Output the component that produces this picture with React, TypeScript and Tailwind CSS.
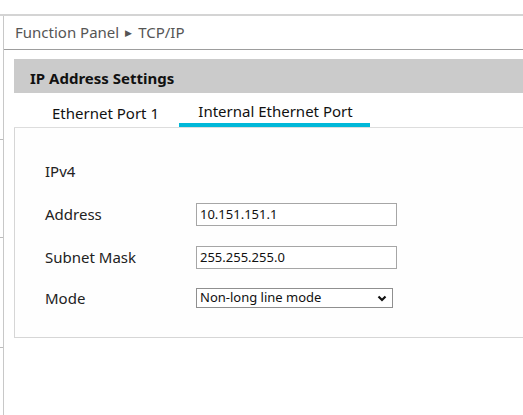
const font = { fontFamily: '"Noto Sans", "Open Sans", sans-serif' };

const Field = ({ label, value }: { label: string; value: string }) => (
  <div className="flex items-center h-[22px]">
    <span className="w-[151px] text-[15px] text-[#222]">{label}</span>
    <input
      readOnly
      value={value}
      className="w-[201px] h-[23px] border border-[#a6a6a6] bg-white px-[3px] text-[13px] text-[#111] outline-none"
    />
  </div>
);

const Chevron = () => (
  <svg width="10" height="7" viewBox="0 0 10 7" className="shrink-0">
    <path d="M1.5 1.5 L5 5 L8.5 1.5" fill="none" stroke="#111" strokeWidth="2.2" />
  </svg>
);

export default function App() {
  return (
    <div className="w-[523px] h-[415px] bg-white overflow-hidden relative" style={font}>
      {/* left ticks */}
      <div className="absolute left-0 top-[139px] w-[3px] h-px bg-[#bbb]" />
      <div className="absolute left-0 top-[237px] w-[3px] h-px bg-[#bbb]" />
      <div className="absolute left-0 top-[347px] w-[3px] h-px bg-[#bbb]" />

      <div className="h-[14px]" />
      <div className="h-[2px] bg-[#d4d4d4]" />
      <div className="ml-[3px] border-l border-[#c8c8c8] h-[399px]">
        {/* breadcrumb */}
        <div className="h-[34px] flex items-center pl-[11px] text-[15px] text-[#555] border-b border-[#9d9d9d]">
          <span>Function Panel</span>
          <span className="mx-[6px] text-[9px] text-[#555]">▶</span>
          <span>TCP/IP</span>
        </div>

        <div className="pl-[10px] pt-[9px]">
          <div className="h-[34px] bg-[#cbcbcb] flex items-center pl-[16px] pt-[5px] text-[15px] font-bold text-[#111]">
            IP Address Settings
          </div>

          {/* tabs */}
          <div className="flex h-[35px] items-end border-b border-[#ddd]">
            <div className="w-[165px] h-full flex items-center text-[15px] text-[#111] pl-[38px] pt-[6px]">
              Ethernet Port 1
            </div>
            <div className="w-[191px] h-full flex flex-col">
              <div className="flex-1 flex items-center justify-center text-[15px] text-[#111] pt-[6px] pl-[2px]">
                Internal Ethernet Port
              </div>
              <div className="h-[4px] bg-[#00b8d9]" />
            </div>
          </div>

          {/* content */}
          <div className="h-[210px] border-l border-b border-[#d6d6d6] bg-[#fefefe] pl-[30px] pt-[33px]">
            <div className="text-[15px] text-[#222] leading-[20px]">IPv4</div>
            <div className="mt-[22px] flex flex-col gap-[21px]">
              <Field label="Address" value="10.151.151.1" />
              <Field label="Subnet Mask" value="255.255.255.0" />
              <div className="flex items-center h-[22px] mt-[-2px]">
                <span className="w-[151px] text-[15px] text-[#222]">Mode</span>
                <div
                  role="combobox"
                  className="w-[197px] h-[20px] border border-[#8f8f8f] bg-white flex items-center justify-between pl-[3px] pr-[5px] text-[13px] text-[#111]"
                >
                  <span>Non-long line mode</span>
                  <Chevron />
                </div>
              </div>
            </div>
          </div>
        </div>
      </div>
    </div>
  );
}
